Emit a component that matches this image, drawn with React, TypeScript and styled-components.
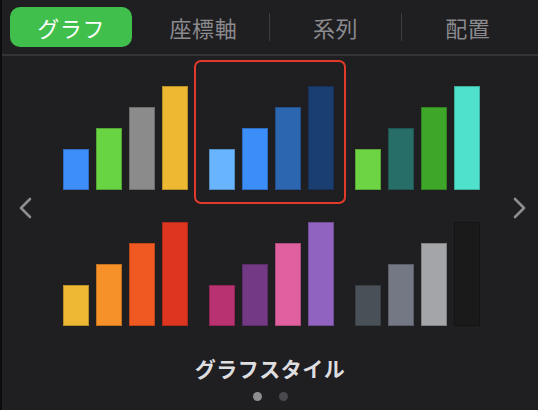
import React from 'react';
import styled, { createGlobalStyle } from 'styled-components';

const GlobalStyle = createGlobalStyle`
  html, body {
    margin: 0;
    padding: 0;
    background: #1f1e21;
  }
  body {
    font-family: "Noto Sans CJK JP", "Noto Sans", sans-serif;
  }
`;

const Panel = styled.div`
  width: 538px;
  height: 410px;
  background: #1f1e21;
  display: flex;
  flex-direction: column;
  overflow: hidden;
  border-left: 2px solid #0c0c0d;
  box-sizing: border-box;
`;

const TabBar = styled.div`
  height: 54px;
  display: flex;
  align-items: center;
  padding: 0 5px 0 3px;
  border-bottom: 2px solid #343336;
  flex-shrink: 0;
`;

const Tab = styled.div<{ $active?: boolean }>`
  flex: 1;
  height: 40px;
  margin: 0 4px 0 5px;
  display: flex;
  align-items: center;
  justify-content: center;
  border-radius: 10px;
  font-size: 22px;
  font-weight: 400;
  letter-spacing: 0.6px;
  color: ${p => (p.$active ? '#ffffff' : '#8b8a8e')};
  background: ${p => (p.$active ? '#41bf4c' : 'transparent')};
`;

const Divider = styled.div<{ $hidden?: boolean }>`
  width: 1px;
  height: 28px;
  background: ${p => (p.$hidden ? 'transparent' : '#3d3c40')};
  flex-shrink: 0;
`;

const Body = styled.div`
  display: grid;
  grid-template-columns: 1fr 438px 1fr;
  padding-top: 8px;
`;

const Arrow = styled.div<{ $side: 'left' | 'right' }>`
  align-self: center;
  justify-self: ${p => (p.$side === 'left' ? 'start' : 'end')};
  margin-top: 16px;
  padding: ${p => (p.$side === 'left' ? '0 0 0 16px' : '0 11px 0 0')};
  display: flex;
`;

const Grid = styled.div`
  display: grid;
  grid-template-columns: repeat(3, 146px);
  grid-auto-rows: 136px;
`;

const Tile = styled.div`
  position: relative;
  display: flex;
  align-items: flex-end;
  justify-content: center;
  padding-bottom: 10px;
  box-sizing: border-box;
`;

const Ring = styled.div`
  position: absolute;
  inset: -4px -3px;
  border: 2.5px solid #e03a2b;
  border-radius: 7px;
`;

const Bars = styled.div`
  display: flex;
  align-items: flex-end;
  gap: 7px;
  padding-left: 3px;
`;

const Bar = styled.div<{ $color: string; $h: number }>`
  width: 26px;
  height: ${p => p.$h}px;
  background: ${p => p.$color};
  box-shadow: inset 0 0 0 1px rgba(0, 0, 0, 0.22);
`;

const Footer = styled.div`
  display: flex;
  flex-direction: column;
  align-items: center;
  padding-top: 18px;
`;

const Title = styled.div`
  font-size: 21px;
  line-height: 28px;
  font-weight: 700;
  letter-spacing: 0.5px;
  color: #dedde0;
`;

const Dots = styled.div`
  display: flex;
  gap: 17px;
  margin-top: 10px;
`;

const Dot = styled.div<{ $on?: boolean }>`
  width: 9px;
  height: 9px;
  border-radius: 50%;
  background: ${p => (p.$on ? '#8e8d91' : '#4a494d')};
`;

const heights = [41, 62, 83, 104];

const palettes: string[][] = [
  ['#3d8ef9', '#69d443', '#8b8b8b', '#eeb833'],
  ['#69b5fd', '#3b8df8', '#2c66b1', '#1b3e71'],
  ['#6dd544', '#276e69', '#3ea628', '#50e1cc'],
  ['#efb834', '#f6912a', '#f05a22', '#dd3620'],
  ['#b83170', '#733984', '#e060a0', '#9163c1'],
  ['#4a5057', '#737884', '#a4a5a9', '#1a1a1b'],
];

const tabs = ['グラフ', '座標軸', '系列', '配置'];

const Chevron = ({ dir }: { dir: 'left' | 'right' }) => (
  <svg width="14" height="22" viewBox="0 0 14 22">
    <polyline
      points={dir === 'left' ? '12,2 3,11 12,20' : '2,2 11,11 2,20'}
      fill="none"
      stroke="#8e8d91"
      strokeWidth="2.6"
      strokeLinecap="round"
      strokeLinejoin="round"
    />
  </svg>
);

export default function App() {
  return (
    <>
      <GlobalStyle />
      <Panel>
        <TabBar>
          {tabs.map((t, i) => (
            <React.Fragment key={t}>
              {i > 0 && <Divider $hidden={i === 1} />}
              <Tab $active={i === 0}>{t}</Tab>
            </React.Fragment>
          ))}
        </TabBar>
        <Body>
          <Arrow $side="left">
            <Chevron dir="left" />
          </Arrow>
          <Grid>
            {palettes.map((colors, i) => (
              <Tile key={i}>
                {i === 1 && <Ring />}
                <Bars>
                  {colors.map((c, j) => (
                    <Bar key={j} $color={c} $h={heights[j]} />
                  ))}
                </Bars>
              </Tile>
            ))}
          </Grid>
          <Arrow $side="right">
            <Chevron dir="right" />
          </Arrow>
        </Body>
        <Footer>
          <Title>グラフスタイル</Title>
          <Dots>
            <Dot $on />
            <Dot />
          </Dots>
        </Footer>
      </Panel>
    </>
  );
}
